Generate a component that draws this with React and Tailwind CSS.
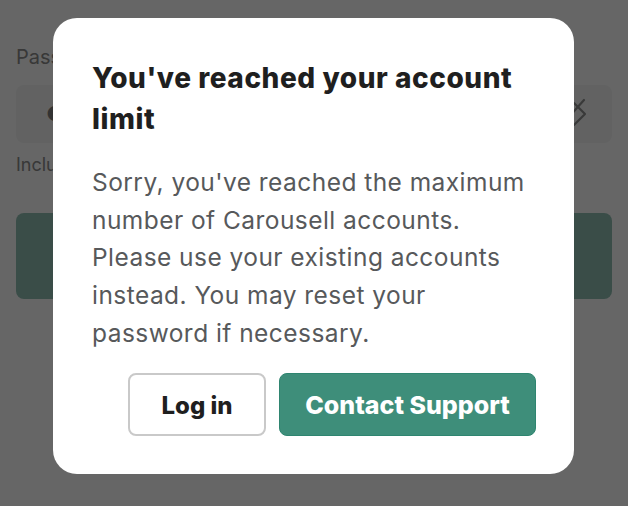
export default function App() {
  return (
    <div className="relative h-[506px] w-[628px] overflow-hidden bg-white font-['Inter',sans-serif]">
      {/* form behind the dialog */}
      <div className="px-4 pt-[44px]">
        <p className="text-[20px] leading-[26px] text-[#8c8c8c]">Password</p>
        <div className="mt-[15px] flex h-[58px] items-center justify-between rounded-[8px] bg-[#f4f6f5] pl-[30px] pr-[24px]">
          <span className="text-[20px] text-[#808080]">●●●●●●●●</span>
          <svg width="34" height="34" viewBox="0 0 34 34" fill="none" stroke="#909090" strokeWidth="2.2" strokeLinejoin="round" strokeLinecap="round">
            <path d="M2 17 L14 6 H20 L31 17 L20 28 H14 Z" />
            <path d="M30 3 L6 30" />
          </svg>
        </div>
        <p className="mt-[10px] text-[18px] leading-6 text-[#8c8c8c]">Include at least 8 characters</p>
        <div className="mt-[36px] h-[86px] rounded-[8px] bg-[#91c0b4]" />
      </div>

      {/* dialog */}
      <div className="absolute inset-0 flex items-center justify-center bg-black/60">
        <div className="mb-[14px] mr-[1px] flex h-[456px] w-[521px] flex-col rounded-[24px] bg-white pl-[39px] pr-[38px] pt-[40px]">
          <h2 className="text-[28px] font-extrabold leading-[41px] tracking-[0.55px] text-[#1f1f1f]">You've reached your account limit</h2>
          <p className="mt-[24px] text-[24.5px] leading-[37.7px] tracking-[0.45px] text-[#57595b]">
            Sorry, you've reached the maximum number of Carousell accounts. Please use your existing accounts instead. You may reset your password if necessary.
          </p>
          <div className="mt-[20px] flex justify-end gap-[13px]">
            <button className="h-[63px] w-[138px] rounded-[8px] border-2 border-[#c9c9c9] bg-white pt-[4px] text-[24px] font-extrabold text-[#1f1f1f]">Log in</button>
            <button className="h-[63px] w-[257px] rounded-[8px] border border-[#2f8570] bg-[#3e8e7a] pt-[4px] text-[25px] font-extrabold text-white">Contact Support</button>
          </div>
        </div>
      </div>
    </div>
  )
}
